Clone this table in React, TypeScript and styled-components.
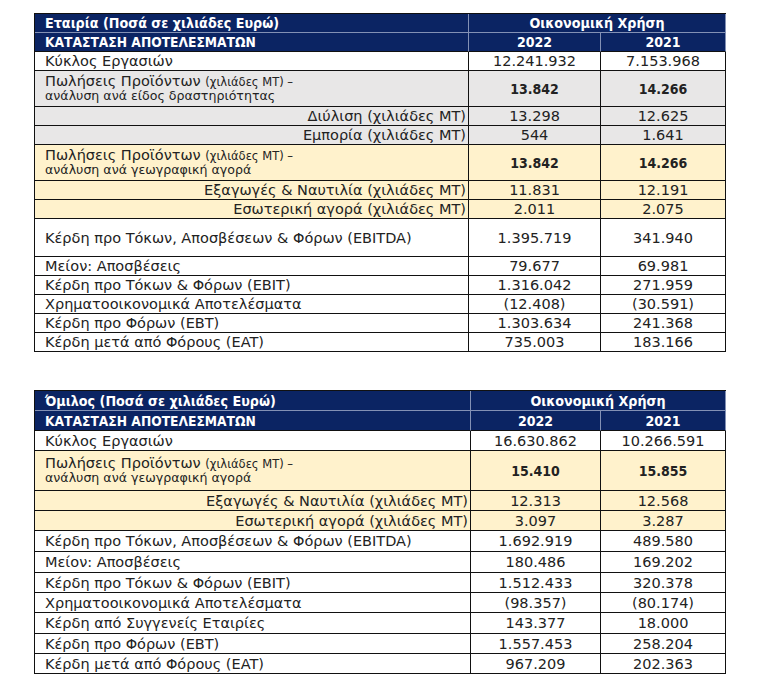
import React from "react";
import styled, { createGlobalStyle } from "styled-components";

const Global = createGlobalStyle`
  html, body { margin: 0; padding: 0; background: #ffffff; }
  body { font-family: "DejaVu Sans", "Liberation Sans", sans-serif; color: #222222; }
`;

const Page = styled.div`
  width: 765px;
  height: 698px;
  padding: 13px 0 0 34px;
  box-sizing: border-box;
  display: flex;
  flex-direction: column;
  gap: 38px;
`;

const Table = styled.div<{ $cols: string }>`
  width: 692px;
  box-sizing: border-box;
  border-top: 1px solid #111;
  border-left: 1px solid #111;
  display: grid;
  grid-template-columns: ${(p) => p.$cols};
`;

type Bg = "white" | "gray" | "yellow" | "navy";
const bgMap: Record<Bg, string> = {
  white: "#ffffff",
  gray: "#e8e7e7",
  yellow: "#fff2cc",
  navy: "#0b2463",
};

const Cell = styled.div<{
  $bg: Bg;
  $h: number;
  $align: "left" | "center" | "right";
  $span?: number;
  $bottomLight?: boolean;
}>`
  box-sizing: border-box;
  height: ${(p) => p.$h}px;
  background: ${(p) => bgMap[p.$bg]};
  border-right: 1px solid ${(p) => (p.$bg === "navy" ? "#8391b5" : "#111")};
  border-bottom: 1px solid ${(p) => (p.$bottomLight ? "#8391b5" : "#111")};
  grid-column: span ${(p) => p.$span ?? 1};
  display: flex;
  align-items: center;
  justify-content: ${(p) =>
    p.$align === "left" ? "flex-start" : p.$align === "right" ? "flex-end" : "center"};
  padding: ${(p) => (p.$align === "left" ? "0 0 0 10px" : p.$align === "right" ? "0 2px 0 0" : "0")};
  font-size: 14.5px;
  line-height: 16px;
  white-space: nowrap;
  overflow: hidden;
  color: ${(p) => (p.$bg === "navy" ? "#ffffff" : "#222222")};
`;

const Head = styled.span<{ $size: number }>`
  font-family: "DejaVu Sans Condensed", "DejaVu Sans", sans-serif;
  font-stretch: condensed;
  font-weight: bold;
  font-size: ${(p) => p.$size}px;
`;

const Strong = styled.span`
  font-family: "DejaVu Sans Condensed", "DejaVu Sans", sans-serif;
  font-stretch: condensed;
  font-weight: bold;
  font-size: 14px;
`;

const TwoLine = styled.div`
  display: flex;
  flex-direction: column;
  line-height: 14px;
`;

const Small = styled.span`
  font-size: 11.5px;
`;

const SubLine = styled.span`
  font-size: 12.6px;
`;

type Row = {
  label: React.ReactNode;
  v1: React.ReactNode;
  v2: React.ReactNode;
  bg: Bg;
  h: number;
  align?: "left" | "right";
};

const sales = (sub: string) => (
  <TwoLine>
    <span>
      Πωλήσεις Προϊόντων <Small>(χιλιάδες ΜΤ) –</Small>
    </span>
    <SubLine>{sub}</SubLine>
  </TwoLine>
);

const company: Row[] = [
  { label: "Κύκλος Εργασιών", v1: "12.241.932", v2: "7.153.968", bg: "white", h: 19 },
  { label: sales("ανάλυση ανά είδος δραστηριότητας"), v1: <Strong>13.842</Strong>, v2: <Strong>14.266</Strong>, bg: "gray", h: 36 },
  { label: "Διύλιση (χιλιάδες ΜΤ)", v1: "13.298", v2: "12.625", bg: "gray", h: 19, align: "right" },
  { label: "Εμπορία (χιλιάδες ΜΤ)", v1: "544", v2: "1.641", bg: "gray", h: 19, align: "right" },
  { label: sales("ανάλυση ανά γεωγραφική αγορά"), v1: <Strong>13.842</Strong>, v2: <Strong>14.266</Strong>, bg: "yellow", h: 36 },
  { label: "Εξαγωγές & Ναυτιλία (χιλιάδες ΜΤ)", v1: "11.831", v2: "12.191", bg: "yellow", h: 19, align: "right" },
  { label: "Εσωτερική αγορά (χιλιάδες ΜΤ)", v1: "2.011", v2: "2.075", bg: "yellow", h: 19, align: "right" },
  { label: "Κέρδη προ Τόκων, Αποσβέσεων & Φόρων (EBITDA)", v1: "1.395.719", v2: "341.940", bg: "white", h: 38 },
  { label: "Μείον: Αποσβέσεις", v1: "79.677", v2: "69.981", bg: "white", h: 19 },
  { label: "Κέρδη προ Τόκων & Φόρων (EBIT)", v1: "1.316.042", v2: "271.959", bg: "white", h: 19 },
  { label: "Χρηματοοικονομικά Αποτελέσματα", v1: "(12.408)", v2: "(30.591)", bg: "white", h: 19 },
  { label: "Κέρδη προ Φόρων (EBT)", v1: "1.303.634", v2: "241.368", bg: "white", h: 19 },
  { label: "Κέρδη μετά από Φόρους (EAT)", v1: "735.003", v2: "183.166", bg: "white", h: 19 },
];

const group: Row[] = [
  { label: "Κύκλος Εργασιών", v1: "16.630.862", v2: "10.266.591", bg: "white", h: 20 },
  { label: sales("ανάλυση ανά γεωγραφική αγορά"), v1: <Strong>15.410</Strong>, v2: <Strong>15.855</Strong>, bg: "yellow", h: 40 },
  { label: "Εξαγωγές & Ναυτιλία (χιλιάδες ΜΤ)", v1: "12.313", v2: "12.568", bg: "yellow", h: 20, align: "right" },
  { label: "Εσωτερική αγορά (χιλιάδες ΜΤ)", v1: "3.097", v2: "3.287", bg: "yellow", h: 20, align: "right" },
  { label: "Κέρδη προ Τόκων, Αποσβέσεων & Φόρων (EBITDA)", v1: "1.692.919", v2: "489.580", bg: "white", h: 21 },
  { label: "Μείον: Αποσβέσεις", v1: "180.486", v2: "169.202", bg: "white", h: 21 },
  { label: "Κέρδη προ Τόκων & Φόρων (EBIT)", v1: "1.512.433", v2: "320.378", bg: "white", h: 20 },
  { label: "Χρηματοοικονομικά Αποτελέσματα", v1: "(98.357)", v2: "(80.174)", bg: "white", h: 20 },
  { label: "Κέρδη από Συγγενείς Εταιρίες", v1: "143.377", v2: "18.000", bg: "white", h: 21 },
  { label: "Κέρδη προ Φόρων (EBT)", v1: "1.557.453", v2: "258.204", bg: "white", h: 20 },
  { label: "Κέρδη μετά από Φόρους (EAT)", v1: "967.209", v2: "202.363", bg: "white", h: 20 },
];

function Statement({
  title,
  rows,
  cols,
  headH,
}: {
  title: string;
  rows: Row[];
  cols: string;
  headH: number;
}) {
  return (
    <Table $cols={cols}>
      <Cell $bg="navy" $h={headH} $align="left" $bottomLight>
        <Head $size={14.2}>{title}</Head>
      </Cell>
      <Cell $bg="navy" $h={headH} $align="center" $span={2} $bottomLight>
        <Head $size={14.2}>Οικονομική Χρήση</Head>
      </Cell>
      <Cell $bg="navy" $h={headH} $align="left">
        <Head $size={13.7}>ΚΑΤΑΣΤΑΣΗ ΑΠΟΤΕΛΕΣΜΑΤΩΝ</Head>
      </Cell>
      <Cell $bg="navy" $h={headH} $align="center">
        <Head $size={14}>2022</Head>
      </Cell>
      <Cell $bg="navy" $h={headH} $align="center">
        <Head $size={14}>2021</Head>
      </Cell>
      {rows.map((r, i) => (
        <React.Fragment key={i}>
          <Cell $bg={r.bg} $h={r.h} $align={r.align ?? "left"}>
            {r.label}
          </Cell>
          <Cell $bg={r.bg} $h={r.h} $align="center">
            {r.v1}
          </Cell>
          <Cell $bg={r.bg} $h={r.h} $align="center">
            {r.v2}
          </Cell>
        </React.Fragment>
      ))}
    </Table>
  );
}

export default function App() {
  return (
    <>
      <Global />
      <Page>
        <Statement
          title="Εταιρία (Ποσά σε χιλιάδες Ευρώ)"
          rows={company}
          cols="434px 132px 125px"
          headH={19}
        />
        <Statement
          title="Όμιλος (Ποσά σε χιλιάδες Ευρώ)"
          rows={group}
          cols="436px 130px 125px"
          headH={20}
        />
      </Page>
    </>
  );
}
